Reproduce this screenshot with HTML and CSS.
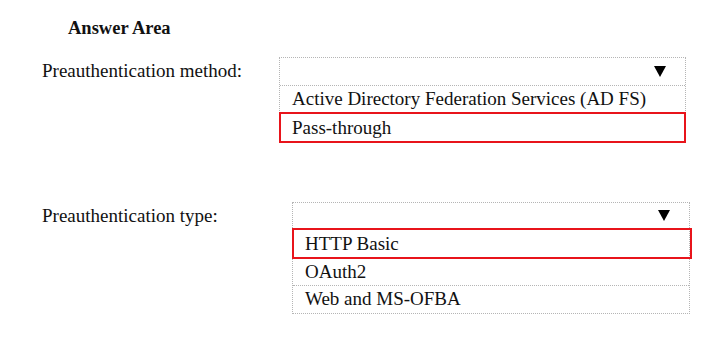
FILE: index.html
```html
<!DOCTYPE html>
<html lang="en">
<head>
    <meta charset="UTF-8">
    <title>Answer Area</title>
    <link rel="stylesheet" href="styles.css">
</head>
<body>
<div id="page">
    <div class="title">Answer Area</div>

    <div class="question q1">
        <span class="label">Preauthentication method:</span>
        <div class="dropdown">
            <div class="head"><span class="caret"></span></div>
            <div class="option">Active Directory Federation Services (AD FS)</div>
            <div class="option picked">Pass-through</div>
        </div>
    </div>

    <div class="question q2">
        <span class="label">Preauthentication type:</span>
        <div class="dropdown">
            <div class="head"><span class="caret"></span></div>
            <div class="option picked">HTTP Basic</div>
            <div class="option">OAuth2</div>
            <div class="option">Web and MS-OFBA</div>
        </div>
    </div>
</div>
</body>
</html>
```

FILE: styles.css
```css
*{
    margin: 0;
    padding: 0;
    box-sizing: border-box;
}
html,body {
    width: 100%;
    height: 100%;
    background-color: #fff;
}
body {
    font-family: "Liberation Serif", "Times New Roman", serif;
    color: #111;
}
#page {
    padding-top: 18px;
}
.title {
    margin-left: 68px;
    font-size: 18.5px;
    font-weight: bold;
    line-height: 20px;
}
.question {
    display: flex;
    align-items: flex-start;
}
.q1 {
    margin-top: 19px;
}
.q2 {
    margin-top: 59px;
}
.label {
    margin-left: 42px;
    font-size: 19px;
    line-height: 28px;
}
.q1 .label {
    width: 237px;
}
.q2 .label {
    width: 250px;
}
.dropdown {
    border: 1px dotted #b5b5b5;
    font-size: 19px;
}
.q1 .dropdown {
    width: 407px;
}
.q2 .dropdown {
    width: 398px;
}
.head {
    height: 28px;
    border-bottom: 1px dotted #b5b5b5;
    display: flex;
    justify-content: flex-end;
    align-items: center;
    padding-right: 19px;
}
.q2 .head {
    height: 26px;
}
.caret {
    width: 0;
    height: 0;
    border-left: 6px solid transparent;
    border-right: 6px solid transparent;
    border-top: 11px solid #000;
}
.option {
    height: 27px;
    line-height: 26px;
    padding-left: 12px;
    border-bottom: 1px dotted #b5b5b5;
    white-space: nowrap;
}
.option:last-child {
    border-bottom: 0;
}
.option.picked {
    border: 2px solid #e8141b;
    height: 31px;
    line-height: 27px;
    padding-left: 11px;
    margin: -1px -1px 0 -1px;
}
.q1 .option.picked {
    margin-bottom: -1px;
}
.q2 .option.picked {
    margin-right: -3px;
}
```
